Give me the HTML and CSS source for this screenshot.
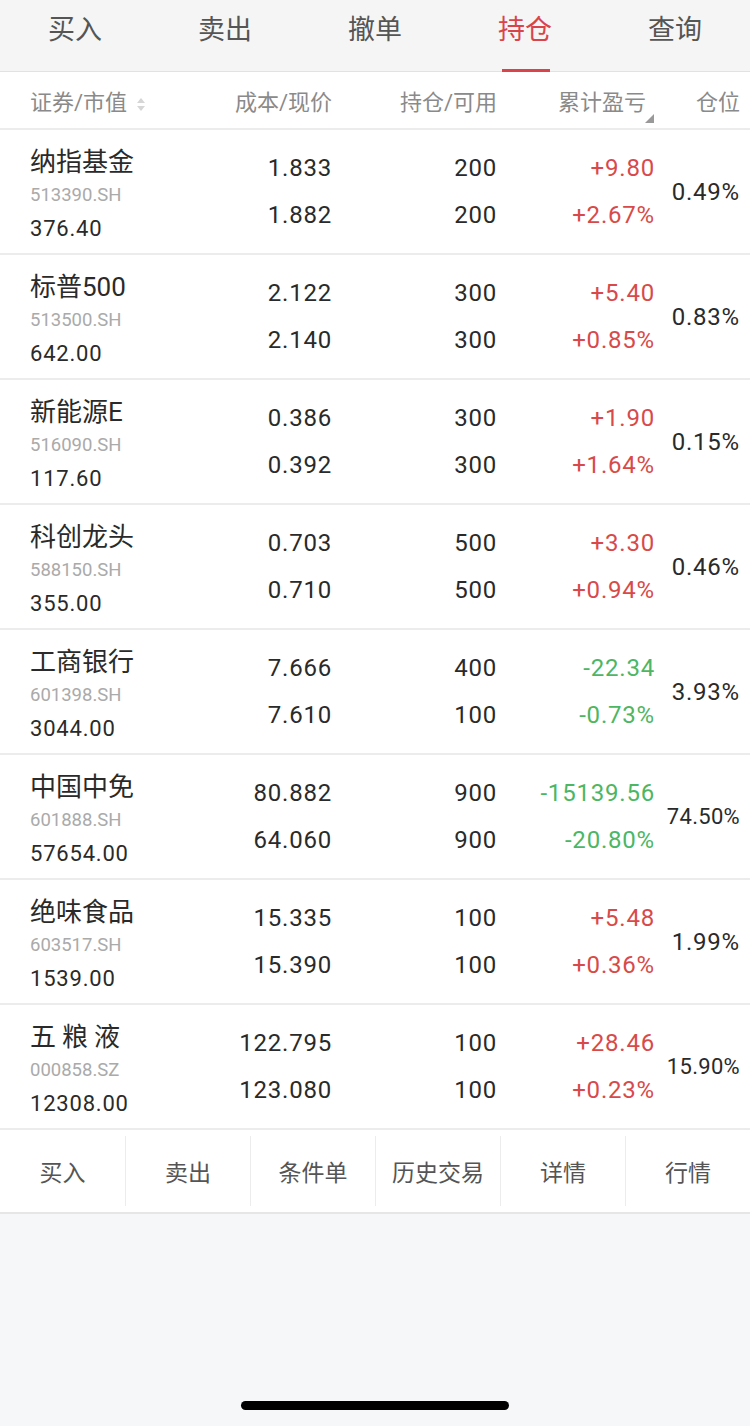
FILE: index.html
```html
<html>
<head>
<meta charset="utf-8">
<link rel="stylesheet" href="styles.css">
</head>
<body>
<div class="page">
  <nav class="tabs">
    <a class="tab">买入</a>
    <a class="tab">卖出</a>
    <a class="tab">撤单</a>
    <a class="tab active">持仓</a>
    <a class="tab">查询</a>
  </nav>

  <div class="grid head">
    <div class="c-name">证券/市值 <span class="sort"><i class="up"></i><i class="down"></i></span></div>
    <div class="c-num">成本/现价</div>
    <div class="c-num">持仓/可用</div>
    <div class="c-num sorted">累计盈亏</div>
    <div class="c-pos">仓位</div>
  </div>

  <div class="grid row">
    <div class="c-name"><div class="name">纳指基金</div><div class="code">513390.SH</div><div class="mv">376.40</div></div>
    <div class="c-num"><div>1.833</div><div>1.882</div></div>
    <div class="c-num"><div>200</div><div>200</div></div>
    <div class="c-num up-c"><div>+9.80</div><div>+2.67%</div></div>
    <div class="c-pos">0.49%</div>
  </div>

  <div class="grid row">
    <div class="c-name"><div class="name">标普500</div><div class="code">513500.SH</div><div class="mv">642.00</div></div>
    <div class="c-num"><div>2.122</div><div>2.140</div></div>
    <div class="c-num"><div>300</div><div>300</div></div>
    <div class="c-num up-c"><div>+5.40</div><div>+0.85%</div></div>
    <div class="c-pos">0.83%</div>
  </div>

  <div class="grid row">
    <div class="c-name"><div class="name">新能源E</div><div class="code">516090.SH</div><div class="mv">117.60</div></div>
    <div class="c-num"><div>0.386</div><div>0.392</div></div>
    <div class="c-num"><div>300</div><div>300</div></div>
    <div class="c-num up-c"><div>+1.90</div><div>+1.64%</div></div>
    <div class="c-pos">0.15%</div>
  </div>

  <div class="grid row">
    <div class="c-name"><div class="name">科创龙头</div><div class="code">588150.SH</div><div class="mv">355.00</div></div>
    <div class="c-num"><div>0.703</div><div>0.710</div></div>
    <div class="c-num"><div>500</div><div>500</div></div>
    <div class="c-num up-c"><div>+3.30</div><div>+0.94%</div></div>
    <div class="c-pos">0.46%</div>
  </div>

  <div class="grid row">
    <div class="c-name"><div class="name">工商银行</div><div class="code">601398.SH</div><div class="mv">3044.00</div></div>
    <div class="c-num"><div>7.666</div><div>7.610</div></div>
    <div class="c-num"><div>400</div><div>100</div></div>
    <div class="c-num down-c"><div>-22.34</div><div>-0.73%</div></div>
    <div class="c-pos">3.93%</div>
  </div>

  <div class="grid row tight">
    <div class="c-name"><div class="name">中国中免</div><div class="code">601888.SH</div><div class="mv">57654.00</div></div>
    <div class="c-num"><div>80.882</div><div>64.060</div></div>
    <div class="c-num"><div>900</div><div>900</div></div>
    <div class="c-num down-c"><div>-15139.56</div><div>-20.80%</div></div>
    <div class="c-pos">74.50%</div>
  </div>

  <div class="grid row">
    <div class="c-name"><div class="name">绝味食品</div><div class="code">603517.SH</div><div class="mv">1539.00</div></div>
    <div class="c-num"><div>15.335</div><div>15.390</div></div>
    <div class="c-num"><div>100</div><div>100</div></div>
    <div class="c-num up-c"><div>+5.48</div><div>+0.36%</div></div>
    <div class="c-pos">1.99%</div>
  </div>

  <div class="grid row tight">
    <div class="c-name"><div class="name spaced">五粮液</div><div class="code">000858.SZ</div><div class="mv">12308.00</div></div>
    <div class="c-num"><div>122.795</div><div>123.080</div></div>
    <div class="c-num"><div>100</div><div>100</div></div>
    <div class="c-num up-c"><div>+28.46</div><div>+0.23%</div></div>
    <div class="c-pos">15.90%</div>
  </div>

  <div class="actions">
    <a class="act">买入</a>
    <a class="act">卖出</a>
    <a class="act">条件单</a>
    <a class="act">历史交易</a>
    <a class="act">详情</a>
    <a class="act">行情</a>
  </div>

  <div class="rest">
    <div class="home-bar"></div>
  </div>
</div>
</body>
</html>
```

FILE: styles.css
```css
/* Base */
body {
    margin: 0;
    font-family: Roboto, "Noto Sans CJK SC", sans-serif;
    color: #2a2a2a;
    background-color: #f6f7f9;
}

.page {
    width: 750px;
    height: 1426px;
    display: flex;
    flex-direction: column;
}

/* Top tabs */
.tabs {
    display: grid;
    grid-template-columns: repeat(5, 1fr);
    height: 71px;
    background-color: #f5f5f5;
    border-bottom: 1px solid #e2e2e2;
}

.tab {
    position: relative;
    display: flex;
    justify-content: center;
    padding-top: 10px;
    font-size: 27px;
    line-height: 40px;
    color: #555;
}

.tab.active {
    color: #d8444a;
}

.tab.active::after {
    content: "";
    position: absolute;
    left: 50%;
    bottom: -1px;
    width: 48px;
    height: 3px;
    margin-left: -23px;
    background-color: #d8444a;
}

/* Table grid */
.grid {
    display: grid;
    grid-template-columns: 150px 152px 165px 158px 85px;
    padding: 0 10px 0 30px;
    background-color: #fff;
    border-bottom: 2px solid #ececec;
}

.c-num, .c-pos {
    text-align: right;
}

/* Header row */
.head {
    height: 56px;
    align-items: center;
    font-size: 22px;
    color: #8a8a8a;
}

.sort {
    display: inline-flex;
    flex-direction: column;
    gap: 3px;
    margin-left: 4px;
    vertical-align: middle;
}

.sort i {
    width: 0;
    height: 0;
    border-left: 4px solid transparent;
    border-right: 4px solid transparent;
}

.sort .up {
    border-bottom: 5px solid #d6d6d6;
}

.sort .down {
    border-top: 5px solid #d6d6d6;
}

.sorted {
    position: relative;
    padding-right: 9px;
}

.sorted::after {
    content: "";
    position: absolute;
    right: 1px;
    bottom: -7px;
    width: 0;
    height: 0;
    border-left: 9px solid transparent;
    border-bottom: 9px solid #999;
}

/* Holding rows */
.row {
    height: 123px;
}

.row .c-name {
    padding-top: 16px;
}

.name {
    font-size: 26px;
    line-height: 33px;
}

.name.spaced {
    letter-spacing: 6px;
}

.code {
    font-size: 18.5px;
    line-height: 33px;
    color: #aaa;
}

.mv {
    font-size: 22px;
    line-height: 33px;
    letter-spacing: 0.8px;
}

.row .c-num {
    padding-top: 15px;
    font-size: 24px;
    line-height: 47px;
    letter-spacing: 0.8px;
}

.row .c-pos {
    align-self: center;
    font-size: 24px;
    letter-spacing: 0.8px;
}

.row.tight .c-pos {
    font-size: 22px;
    letter-spacing: 0.3px;
}

.up-c {
    color: #d84a4a;
}

.down-c {
    color: #4db663;
}

/* Bottom actions */
.actions {
    display: grid;
    grid-template-columns: repeat(6, 1fr);
    height: 82px;
    align-items: center;
    background-color: #fff;
    border-bottom: 2px solid #e6e6e6;
}

.act {
    display: flex;
    justify-content: center;
    align-items: center;
    height: 70px;
    font-size: 23px;
    color: #555;
    border-left: 1px solid #ececec;
}

.act:first-child {
    border-left: 0;
}

/* Empty area + home indicator */
.rest {
    flex: 1;
    display: flex;
    align-items: flex-end;
    justify-content: center;
    padding-bottom: 16px;
}

.home-bar {
    width: 268px;
    height: 9px;
    border-radius: 5px;
    background-color: #000;
}
```
